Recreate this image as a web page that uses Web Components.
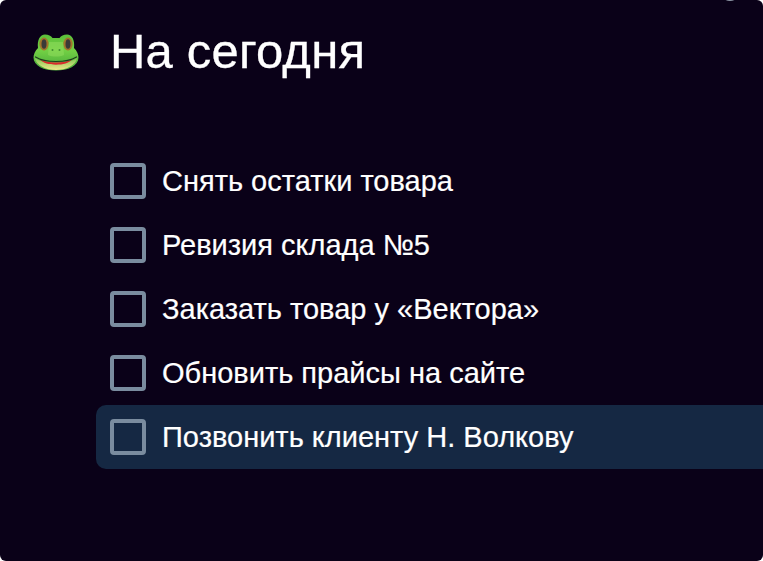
<!DOCTYPE html>
<html lang="ru">
<head>
<meta charset="utf-8">
<title>На сегодня</title>
<style>
    html, body { margin: 0; height: 100%; background: #fff; }
    body { font-family: "Liberation Sans", Arial, sans-serif; overflow: hidden; }
</style>
</head>
<body>
<today-panel heading="На сегодня">
    <task-item>Снять остатки товара</task-item>
    <task-item>Ревизия склада №5</task-item>
    <task-item>Заказать товар у «Вектора»</task-item>
    <task-item>Обновить прайсы на сайте</task-item>
    <task-item active>Позвонить клиенту Н. Волкову</task-item>
</today-panel>
<script>
// Frog emoji, drawn by hand
class FrogIcon extends HTMLElement {
    constructor() {
        super();
        this.attachShadow({ mode: 'open' });
        this.shadowRoot.innerHTML = `
            <style>
                :host { display: block; width: 46px; height: 37px; }
                svg { display: block; width: 100%; height: 100%; }
            </style>
            <svg viewBox="0 0 46 37">
                <defs>
                    <linearGradient id="skin" x1="0" y1="0" x2="0" y2="1">
                        <stop offset="0" stop-color="#5cc03a"/>
                        <stop offset="0.45" stop-color="#72d044"/>
                        <stop offset="0.8" stop-color="#55b53e"/>
                    </linearGradient>
                    <linearGradient id="jaw" x1="0" y1="0" x2="0" y2="1">
                        <stop offset="0" stop-color="#7ec653"/>
                        <stop offset="1" stop-color="#f0e68a"/>
                    </linearGradient>
                </defs>
                <path d="M5 14C4 6 7 .5 12 .5c3.500 0 6 1.500 7.500 3.500h7C28 2 30.500.5 34 .5c5 0 8 5.500 7 13.500 3 3 4.500 6.500 4.500 9.500C45.500 32 35 36.500 23 36.500S.5 32 .5 23.500C.5 20.500 2 17 5 14z" fill="url(#skin)"/>
                <path d="M2 24c5 3.500 12 5 21 5s16-1.500 21-5c-1 7.500-11 12-21 12S3 31.500 2 24z" fill="url(#jaw)"/>
                <path d="M7 25.500c4 2 9 3 16 3s12-1 16-3c-3 3.500-9 5.200-16 5.200S10 29 7 25.500z" fill="#d92a2c"/>
                <path d="M2.500 23c5 3 12 4.500 20.500 4.500S38.500 26 43.500 23" fill="none" stroke="#1d3d1c" stroke-width="1.200" stroke-linecap="round"/>
                <ellipse cx="11" cy="10" rx="4.600" ry="6.400" fill="#a2752c"/>
                <ellipse cx="11" cy="10" rx="2.500" ry="4.800" fill="#3a3a38"/>
                <ellipse cx="35" cy="10" rx="4.600" ry="6.400" fill="#a2752c"/>
                <ellipse cx="35" cy="10" rx="2.500" ry="4.800" fill="#3a3a38"/>
                <path d="M16 8h14l1 13c-5 2-11 2-16 0z" fill="#8fdc5c" opacity="0.55"/>
                <circle cx="19.500" cy="16" r="1" fill="#3f8f30"/>
                <circle cx="26.500" cy="16" r="1" fill="#3f8f30"/>
            </svg>
        `;
    }
}
customElements.define('frog-icon', FrogIcon);

// One row of the list
class TaskItem extends HTMLElement {
    constructor() {
        super();
        this.attachShadow({ mode: 'open' });
        this.shadowRoot.innerHTML = `
            <style>
                :host {
                    display: flex;
                    align-items: center;
                    gap: 16px;
                    height: 64px;
                    box-sizing: border-box;
                    padding-left: 14px;
                    border-radius: 10px 0 0 10px;
                    font-size: 29px;
                    color: #fff;
                    -webkit-text-stroke: 0.2px #fff;
                }
                :host([active]) { background: #152843; }
                .box {
                    flex: none;
                    width: 36px;
                    height: 36px;
                    box-sizing: border-box;
                    border: 4px solid #7a8c9f;
                    border-radius: 4px;
                }
            </style>
            <span class="box"></span>
            <slot></slot>
        `;
    }
}
customElements.define('task-item', TaskItem);

// The dark window with heading and list
class TodayPanel extends HTMLElement {
    constructor() {
        super();
        this.attachShadow({ mode: 'open' });
        this.shadowRoot.innerHTML = `
            <style>
                :host {
                    display: block;
                    position: relative;
                    height: 561px;
                    box-sizing: border-box;
                    padding: 25px 0 0 33px;
                    background: #0a0118;
                    border-radius: 6px;
                    overflow: hidden;
                }
                header { display: flex; align-items: center; gap: 31px; height: 54px; }
                h1 { margin: 0 0 2px; font-size: 49px; font-weight: 400; letter-spacing: 0.2px; color: #fff; -webkit-text-stroke: 0.3px #fff; }
                .list { margin: 70px 0 0 63px; }
                .dot {
                    position: absolute;
                    top: -19px;
                    right: 23px;
                    width: 20px;
                    height: 20px;
                    border-radius: 50%;
                    background: #8e97a6;
                }
            </style>
            <span class="dot"></span>
            <header>
                <frog-icon></frog-icon>
                <h1></h1>
            </header>
            <div class="list"><slot></slot></div>
        `;
        this.shadowRoot.querySelector('h1').textContent = this.getAttribute('heading');
    }
}
customElements.define('today-panel', TodayPanel);
</script>
</body>
</html>
